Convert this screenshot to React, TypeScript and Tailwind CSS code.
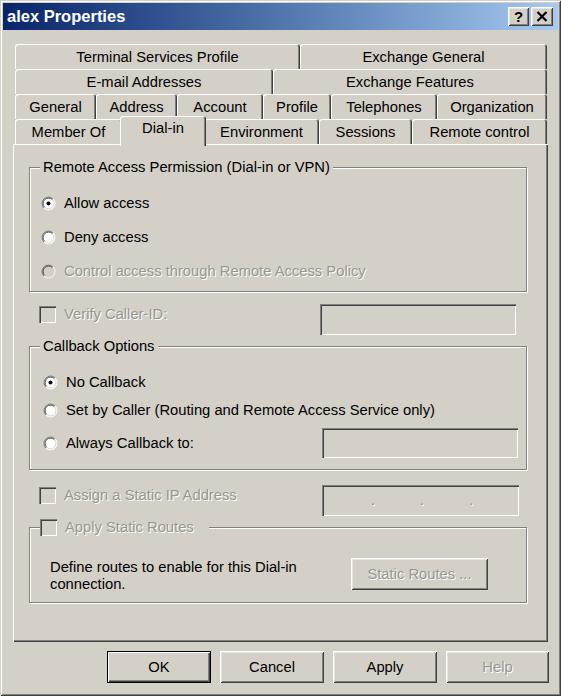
import React from "react";

const raised =
  "shadow-[inset_1px_1px_0_#ffffff,inset_-1px_-1px_0_#404040,inset_2px_2px_0_#e6e4df,inset_-2px_-2px_0_#808080]";
const sunken =
  "shadow-[inset_1px_1px_0_#808080,inset_2px_2px_0_#404040,inset_-1px_-1px_0_#ffffff,inset_-2px_-2px_0_#d4d0c8]";
const disabledText = "text-[#98968f] [text-shadow:1px_1px_0_#ffffff]";

function Radio({ checked = false, disabled = false }: { checked?: boolean; disabled?: boolean }) {
  return (
    <svg width="15" height="15" viewBox="0 0 15 15" className="shrink-0">
      <circle cx="7.5" cy="7.5" r="6.5" fill={disabled ? "#d4d0c8" : "#ffffff"} />
      <path d="M2.904 12.096 A6.5 6.5 0 0 1 12.096 2.904" stroke="#808080" strokeWidth="1" fill="none" />
      <path d="M12.096 2.904 A6.5 6.5 0 0 1 2.904 12.096" stroke="#ffffff" strokeWidth="1" fill="none" />
      <path d="M3.611 11.389 A5.5 5.5 0 0 1 11.389 3.611" stroke="#404040" strokeWidth="1" fill="none" />
      <path d="M11.389 3.611 A5.5 5.5 0 0 1 3.611 11.389" stroke="#d4d0c8" strokeWidth="1" fill="none" />
      {checked && <circle cx="7.5" cy="7.5" r="2" fill="#000000" />}
    </svg>
  );
}

function Checkbox() {
  return <div className={`w-[17px] h-[17px] shrink-0 bg-[#d4d0c8] ${sunken}`} />;
}

function Tab({ label, w, selected = false }: { label: string; w: string; selected?: boolean }) {
  if (selected) {
    return (
      <div
        className={`${w} relative z-10 -mx-[2px] -mt-[3px] -mb-[2px] h-[30px] shrink-0 bg-[#d4d0c8] flex justify-center pt-[3px] leading-[18px] rounded-t-[3px] shadow-[inset_1px_1px_0_#ffffff,inset_-1px_0_0_#404040,inset_-2px_0_0_#808080]`}
      >
        {label}
      </div>
    );
  }
  return (
    <div
      className={`${w} h-[25px] shrink-0 flex items-center justify-center leading-[18px] rounded-t-[3px] shadow-[inset_1px_1px_0_#ffffff,inset_-1px_0_0_#404040,inset_-2px_0_0_#808080]`}
    >
      {label}
    </div>
  );
}

function Group({ title, className, children }: { title: React.ReactNode; className: string; children?: React.ReactNode }) {
  return (
    <div className={`relative w-[498px] border border-[#808080] shadow-[1px_1px_0_#ffffff,inset_1px_1px_0_#ffffff] ${className}`}>
      <div className="absolute -top-[9px] left-[10px] px-[3px] bg-[#d4d0c8] leading-[17px] flex items-center">{title}</div>
      {children}
    </div>
  );
}

function Btn({ children, w = "w-[104px]", def = false, disabled = false }: { children: React.ReactNode; w?: string; def?: boolean; disabled?: boolean }) {
  return (
    <div
      className={`${w} h-[32px] flex items-center justify-center ${
        def
          ? "border border-black shadow-[inset_1px_1px_0_#ffffff,inset_-1px_-1px_0_#404040,inset_-2px_-2px_0_#808080]"
          : raised
      } ${disabled ? disabledText : ""}`}
    >
      {children}
    </div>
  );
}

export default function App() {
  const row1 = [
    { l: "Terminal Services Profile", w: "w-[285px]" },
    { l: "Exchange General", w: "w-[247px]" },
  ];
  const row2 = [
    { l: "E-mail Addresses", w: "w-[258px]" },
    { l: "Exchange Features", w: "w-[274px]" },
  ];
  const row3 = [
    { l: "General", w: "w-[81px]" },
    { l: "Address", w: "w-[81px]" },
    { l: "Account", w: "w-[86px]" },
    { l: "Profile", w: "w-[68px]" },
    { l: "Telephones", w: "w-[106px]" },
    { l: "Organization", w: "w-[110px]" },
  ];
  const row4 = [
    { l: "Member Of", w: "w-[107px]" },
    { l: "Dial-in", w: "w-[86px]", s: true },
    { l: "Environment", w: "w-[115px]" },
    { l: "Sessions", w: "w-[93px]" },
    { l: "Remote control", w: "w-[135px]" },
  ];

  return (
    <div className="w-[561px] h-[696px] overflow-hidden bg-[#d4d0c8] text-black text-[14.75px] font-['Liberation_Sans',Arial,sans-serif] flex flex-col shadow-[inset_1px_1px_0_#d4d0c8,inset_-1px_-1px_0_#404040,inset_2px_2px_0_#ffffff,inset_-2px_-2px_0_#808080]">
      {/* Title bar */}
      <div className="mx-[3px] mt-[3px] h-[27px] shrink-0 bg-linear-to-r from-[#0a246a] to-[#a6caf0] flex items-center pl-[4px] pr-[5px]">
        <span className="text-white font-bold text-[16.5px] leading-none">alex Properties</span>
        <div className="ml-auto flex gap-[2px]">
          <div className={`w-[21px] h-[19px] bg-[#d4d0c8] flex items-center justify-center font-bold text-[15px] leading-none ${raised}`}>?</div>
          <div className={`w-[22px] h-[19px] bg-[#d4d0c8] flex items-center justify-center ${raised}`}>
            <svg width="12" height="11" viewBox="0 0 12 11">
              <path d="M1.5 1 L10.5 10 M10.5 1 L1.5 10" stroke="#000000" strokeWidth="2.2" fill="none" />
            </svg>
          </div>
        </div>
      </div>

      {/* Tabs */}
      <div className="mt-[14px] ml-[15px] w-[532px] flex flex-col shrink-0">
        <div className="flex">{row1.map((t) => <Tab key={t.l} label={t.l} w={t.w} />)}</div>
        <div className="flex">{row2.map((t) => <Tab key={t.l} label={t.l} w={t.w} />)}</div>
        <div className="flex">{row3.map((t) => <Tab key={t.l} label={t.l} w={t.w} />)}</div>
        <div className="flex items-start">{row4.map((t) => <Tab key={t.l} label={t.l} w={t.w} selected={!!t.s} />)}</div>
      </div>

      {/* Panel */}
      <div className="ml-[13px] w-[535px] h-[498px] shrink-0 pl-[16px] pt-[23px] flex flex-col shadow-[inset_1px_1px_0_#ffffff,inset_-1px_-1px_0_#404040,inset_-2px_-2px_0_#808080]">
        <Group title="Remote Access Permission (Dial-in or VPN)" className="h-[125px] pt-[25px] pl-[11px] flex flex-col gap-[13px]">
          <div className="h-[21px] flex items-center gap-[8px]">
            <Radio checked />
            <span>Allow access</span>
          </div>
          <div className="h-[21px] flex items-center gap-[8px]">
            <Radio />
            <span>Deny access</span>
          </div>
          <div className="h-[21px] flex items-center gap-[8px]">
            <Radio disabled />
            <span className={disabledText}>Control access through Remote Access Policy</span>
          </div>
        </Group>

        <div className="mt-[12px] w-[498px] h-[31px] flex items-start">
          <div className="ml-[10px] mt-[2px]"><Checkbox /></div>
          <span className={`ml-[8px] mt-[2px] leading-[17px] ${disabledText}`}>Verify Caller-ID:</span>
          <div className={`ml-auto mr-[11px] w-[196px] h-[31px] bg-[#d4d0c8] ${sunken}`} />
        </div>

        <Group title="Callback Options" className="mt-[11px] h-[124px] pt-[25px] pl-[13px] flex flex-col">
          <div className="h-[20px] flex items-center gap-[8px]">
            <Radio checked />
            <span>No Callback</span>
          </div>
          <div className="mt-[8px] h-[20px] flex items-center gap-[8px]">
            <Radio />
            <span>Set by Caller (Routing and Remote Access Service only)</span>
          </div>
          <div className="mt-[8px] h-[30px] flex items-center">
            <Radio />
            <span className="ml-[8px]">Always Callback to:</span>
            <div className={`ml-auto mr-[8px] w-[196px] h-[30px] bg-[#d4d0c8] ${sunken}`} />
          </div>
        </Group>

        <div className="mt-[15px] w-[498px] h-[31px] flex items-start">
          <div className="ml-[10px] mt-[2px]"><Checkbox /></div>
          <span className={`ml-[8px] mt-[2px] leading-[17px] ${disabledText}`}>Assign a Static IP Address</span>
          <div className={`ml-auto mr-[8px] w-[197px] h-[31px] bg-[#d4d0c8] flex items-center pl-[49px] gap-[45px] ${sunken}`}>
            <span className={disabledText}>.</span>
            <span className={disabledText}>.</span>
            <span className={disabledText}>.</span>
          </div>
        </div>

        <Group
          title={
            <div className="flex items-center gap-[8px] -ml-[3px] pr-[12px]">
              <Checkbox />
              <span className={disabledText}>Apply Static Routes</span>
            </div>
          }
          className="mt-[11px] h-[76px] pt-[30px] pl-[20px] flex items-start"
        >
          <div className="w-[258px] mt-[1px] leading-[17px]">Define routes to enable for this Dial-in connection.</div>
          <div className="ml-[43px]">
            <Btn w="w-[137px]" disabled>
              Static Routes ...
            </Btn>
          </div>
        </Group>
      </div>

      {/* Buttons */}
      <div className="mt-[9px] flex justify-end gap-[9px] pr-[12px]">
        <Btn def>OK</Btn>
        <Btn>Cancel</Btn>
        <Btn>Apply</Btn>
        <Btn w="w-[103px]" disabled>
          Help
        </Btn>
      </div>
    </div>
  );
}
